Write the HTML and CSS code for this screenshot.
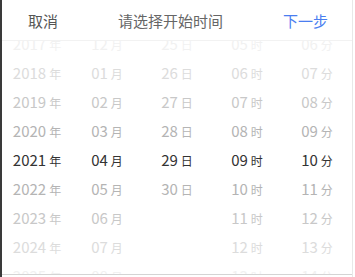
FILE: index.html
```html
<!DOCTYPE html>
<html lang="zh-CN">
<head>
  <meta charset="UTF-8" />
  <meta name="viewport" content="width=device-width, initial-scale=1" />
  <title>选择开始时间</title>
  <link rel="stylesheet" href="styles.css">
</head>
<body>
  <div class="sheet">
    <header class="bar">
      <a class="bar-btn cancel">取消</a>
      <span class="bar-title">请选择开始时间</span>
      <a class="bar-btn next">下一步</a>
    </header>

    <div class="picker">
      <div class="col">
        <div class="row f4">2017<small>年</small></div>
        <div class="row f3">2018<small>年</small></div>
        <div class="row f2">2019<small>年</small></div>
        <div class="row f1">2020<small>年</small></div>
        <div class="row on">2021<small>年</small></div>
        <div class="row f1">2022<small>年</small></div>
        <div class="row f2">2023<small>年</small></div>
        <div class="row f3">2024<small>年</small></div>
        <div class="row f4">2025<small>年</small></div>
      </div>
      <div class="col">
        <div class="row f4">12<small>月</small></div>
        <div class="row f3">01<small>月</small></div>
        <div class="row f2">02<small>月</small></div>
        <div class="row f1">03<small>月</small></div>
        <div class="row on">04<small>月</small></div>
        <div class="row f1">05<small>月</small></div>
        <div class="row f2">06<small>月</small></div>
        <div class="row f3">07<small>月</small></div>
        <div class="row f4">08<small>月</small></div>
      </div>
      <div class="col">
        <div class="row f4">25<small>日</small></div>
        <div class="row f3">26<small>日</small></div>
        <div class="row f2">27<small>日</small></div>
        <div class="row f1">28<small>日</small></div>
        <div class="row on">29<small>日</small></div>
        <div class="row f1">30<small>日</small></div>
      </div>
      <div class="col">
        <div class="row f4">05<small>时</small></div>
        <div class="row f3">06<small>时</small></div>
        <div class="row f2">07<small>时</small></div>
        <div class="row f1">08<small>时</small></div>
        <div class="row on">09<small>时</small></div>
        <div class="row f1">10<small>时</small></div>
        <div class="row f2">11<small>时</small></div>
        <div class="row f3">12<small>时</small></div>
        <div class="row f4">13<small>时</small></div>
      </div>
      <div class="col">
        <div class="row f4">06<small>分</small></div>
        <div class="row f3">07<small>分</small></div>
        <div class="row f2">08<small>分</small></div>
        <div class="row f1">09<small>分</small></div>
        <div class="row on">10<small>分</small></div>
        <div class="row f1">11<small>分</small></div>
        <div class="row f2">12<small>分</small></div>
        <div class="row f3">13<small>分</small></div>
        <div class="row f4">14<small>分</small></div>
      </div>
    </div>
  </div>
</body>
</html>
```

FILE: styles.css
```css
body {
  margin: 0;
  background: #fff;
  font-family: "Noto Sans CJK SC", "Noto Sans", sans-serif;
  color: #333;
}
.sheet {
  width: 350px;
  height: 277px;
  border-left: 2px solid #3a3a3a;
  border-right: 1px solid #e8e8e8;
  background: #fff;
  display: flex;
  flex-direction: column;
}

/* top bar */
.bar {
  height: 40px;
  flex-shrink: 0;
  display: flex;
  align-items: center;
  justify-content: space-between;
  padding: 0 24px 0 26px;
  border-bottom: 1px solid #f2f2f2;
  background: #fff;
  position: relative;
  z-index: 2;
  font-size: 15px;
}
.bar-btn {
  cursor: pointer;
}
.cancel {
  color: #555;
}
.bar-title {
  color: #666;
}
.next {
  color: #4a7ef0;
}

/* wheels */
.picker {
  height: 233px;
  flex-shrink: 0;
  overflow: hidden;
  display: flex;
  border-bottom: 1px solid #d4d4d4;
}
.col {
  width: 70px;
  display: flex;
  flex-direction: column;
  margin-top: -12px;
}
.row {
  height: 29px;
  line-height: 29px;
  text-align: center;
  font-size: 15px;
  white-space: nowrap;
}
.row small {
  font-size: 12px;
  margin-left: 3px;
}
.row.on { color: #333; }
.row.f1 { color: #b4b4b4; }
.row.f2 { color: #c8c8c8; }
.row.f3 { color: #dcdcdc; }
.row.f4 { color: #f1f1f1; }
```
